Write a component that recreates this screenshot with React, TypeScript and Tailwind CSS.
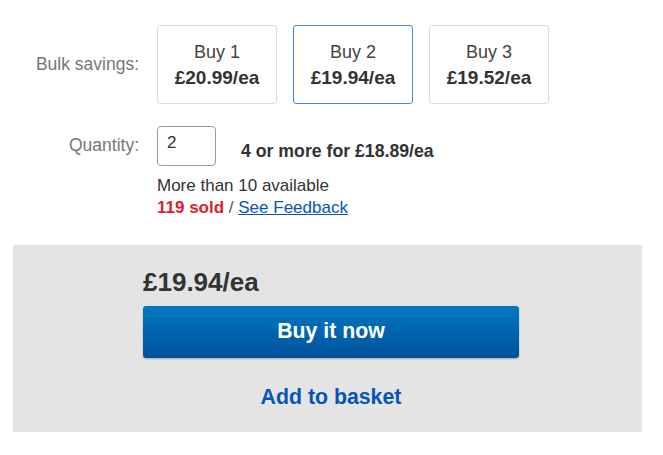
import { useState } from "react"

const tiers = [
  { qty: 1, price: "£20.99/ea" },
  { qty: 2, price: "£19.94/ea" },
  { qty: 3, price: "£19.52/ea" },
]

export default function App() {
  const [selected, setSelected] = useState(2)

  return (
    <main className="min-h-screen bg-white pt-[25px] text-[#333] font-['Liberation_Sans',Arial,sans-serif]">
      {/* Bulk savings */}
      <div className="flex items-center">
        <div className="w-[140px] pr-[1px] text-right text-[17.5px] text-[#777]">Bulk savings:</div>
        <div className="ml-[17px] flex gap-[16px]">
          {tiers.map(t => (
            <button
              key={t.qty}
              onClick={() => setSelected(t.qty)}
              className={
                "flex h-[79px] w-[120px] flex-col items-center justify-center rounded-[3px] border bg-white leading-[26px] " +
                (selected === t.qty ? "border-[#4a86d8]" : "border-[#dcdcdc]")
              }
            >
              <span className="text-[18px] text-[#444]">Buy {t.qty}</span>
              <span className="text-[19px] font-bold text-[#333]">{t.price}</span>
            </button>
          ))}
        </div>
      </div>

      {/* Quantity */}
      <div className="mt-[22px] flex items-start">
        <div className="h-[40px] w-[139px] pt-[8px] text-right text-[17.5px] leading-[22px] text-[#777]">Quantity:</div>
        <div className="ml-[18px]">
          <div className="flex items-start">
            <div className="h-[40px] w-[59px] rounded-[4px] border border-[#9a9a9a] bg-white px-[9px] pt-[5px] text-[17px] leading-[22px] text-[#333]">
              2
            </div>
            <div className="ml-[25px] pt-[14px] text-[17.7px] font-bold leading-[22px] text-[#333]">
              4 or more for £18.89/ea
            </div>
          </div>
          <div className="mt-[9px] text-[17px] leading-[22px]">
            <div className="text-[#333]">More than 10 available</div>
            <div>
              <span className="font-bold text-[#dd1e31]">119 sold</span>
              <span className="text-[#555]"> / </span>
              <a href="#" className="text-[#0654ba] underline">See Feedback</a>
            </div>
          </div>
        </div>
      </div>

      {/* Buy panel */}
      <div className="mx-[13px] mt-[26px] w-[629px] bg-[#e4e4e4] pb-[23px] pl-[130px] pt-[22px]">
        <div className="text-[26px] font-bold leading-[30px] text-[#333]">£19.94/ea</div>
        <button className="mt-[9px] flex h-[52px] w-[376px] items-center justify-center rounded-[3px] bg-gradient-to-b from-[#0079c1] to-[#00519b] text-[21.3px] font-bold text-white shadow-[0_1px_2px_rgba(0,0,0,0.25)]">
          Buy it now
        </button>
        <div className="mt-[27px] w-[376px] text-center text-[21.3px] font-bold leading-[24px] text-[#0654ba]">
          Add to basket
        </div>
      </div>
    </main>
  )
}
